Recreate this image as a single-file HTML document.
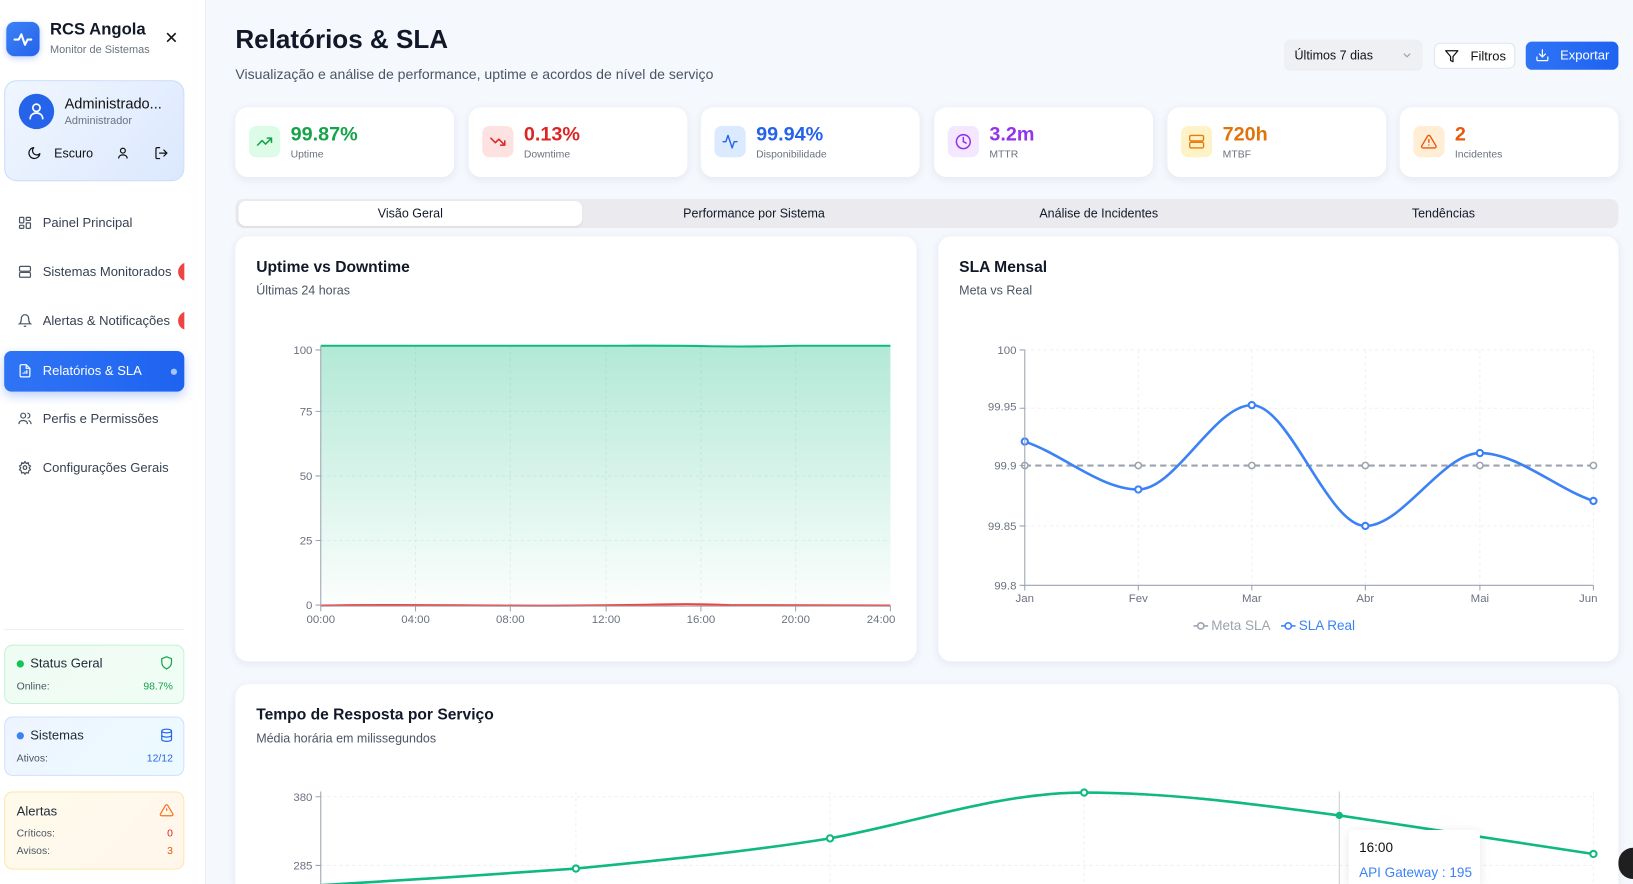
<!DOCTYPE html>
<html><head><meta charset="utf-8">
<style>
*{box-sizing:border-box;margin:0;padding:0}
html,body{width:1633px;height:884px;overflow:hidden;background:#f5f8fd}
body{font-family:"Liberation Sans",sans-serif;color:#111827}
#w{position:absolute;left:0;top:0;width:1568px;height:849px;transform:scale(1.04145);transform-origin:0 0;background:#f5f8fd;overflow:hidden}
.a{position:absolute}
.side{left:0;top:0;width:198px;height:849px;background:#fff;border-right:1px solid #e8ecf2;overflow:hidden}
.nav{position:absolute;left:4px;width:173px;height:39px;border-radius:7px;font-size:12.5px;color:#374151;overflow:hidden}
.nav span{position:absolute;left:37px;top:12px}
.nav svg{position:absolute;left:13px;top:12px}
.badge{position:absolute;left:167px;top:10px;width:18px;height:18px;border-radius:9px;background:#ef4444}
.card{background:#fff;border-radius:12px;box-shadow:0 2px 8px rgba(30,50,90,.08)}
.sc{position:absolute;top:103px;width:210px;height:67px}
.sc .ic{position:absolute;left:13px;top:18px;width:30px;height:30px;border-radius:7px}
.sc .ic svg{position:absolute;left:7px;top:7px}
.sc .v{position:absolute;left:53px;top:16px;font-size:19px;font-weight:bold}
.sc .l{position:absolute;left:53px;top:40px;font-size:10px;color:#6b7280}
.ctit{position:absolute;font-size:15px;font-weight:bold;color:#111827}
.csub{position:absolute;font-size:12px;color:#4b5563}
.tab{position:absolute;top:198px;font-size:12px;color:#111827;transform:translateX(-50%)}
.stc{position:absolute;left:4px;width:173px;border-radius:8px;font-size:12px}
</style></head><body>
<div id="w">
<!-- sidebar -->
<div class="a side">
  <div class="a" style="left:6px;top:21px;width:32px;height:33px;border-radius:8px;background:linear-gradient(135deg,#3b82f6,#2563eb);box-shadow:0 2px 6px rgba(37,99,235,.3)">
    <svg width="32" height="33" viewBox="0 0 32 33"><path d="M8 17h4l2.5-5 3.5 10 2.5-5H24" fill="none" stroke="#fff" stroke-width="2" stroke-linecap="round" stroke-linejoin="round"/></svg>
  </div>
  <div class="a" style="left:48px;top:20px;font-size:16px;font-weight:bold">RCS Angola</div>
  <div class="a" style="left:48px;top:42px;font-size:10.5px;color:#6b7280">Monitor de Sistemas</div>
  <div class="a" style="left:158px;top:27px;font-size:16px;color:#111">✕</div>
  <div class="a" style="left:4px;top:77px;width:173px;height:97px;border-radius:12px;background:linear-gradient(135deg,#f0f6ff,#dbe8fd);border:1px solid #c9dcfa"></div>
  <div class="a" style="left:18px;top:90px;width:34px;height:34px;border-radius:17px;background:#2563eb">
    <svg width="34" height="34" viewBox="0 0 34 34"><circle cx="17" cy="13.5" r="3.5" fill="none" stroke="#fff" stroke-width="1.6"/><path d="M11 24c0-3.5 2.7-5.5 6-5.5s6 2 6 5.5" fill="none" stroke="#fff" stroke-width="1.6" stroke-linecap="round"/></svg>
  </div>
  <div class="a" style="left:62px;top:91px;font-size:14px;color:#111">Administrado...</div>
  <div class="a" style="left:62px;top:110px;font-size:10.5px;color:#6b7280">Administrador</div>
  <svg class="a" style="left:26px;top:140px" width="14" height="14" viewBox="0 0 24 24"><path d="M21 13A9 9 0 1 1 11 3a7 7 0 0 0 10 10z" fill="none" stroke="#111" stroke-width="2" stroke-linejoin="round"/></svg>
  <div class="a" style="left:52px;top:140px;font-size:12px;color:#111">Escuro</div>
  <svg class="a" style="left:111px;top:140px" width="14" height="14" viewBox="0 0 24 24"><circle cx="12" cy="8" r="4" fill="none" stroke="#111" stroke-width="2"/><path d="M5 21c0-4 3-6 7-6s7 2 7 6" fill="none" stroke="#111" stroke-width="2"/></svg>
  <svg class="a" style="left:148px;top:140px" width="14" height="14" viewBox="0 0 24 24"><path d="M9 21H5a2 2 0 0 1-2-2V5a2 2 0 0 1 2-2h4M16 17l5-5-5-5M21 12H9" fill="none" stroke="#111" stroke-width="2" stroke-linecap="round" stroke-linejoin="round"/></svg>

  <div class="nav" style="top:195px"><svg width="14" height="14" viewBox="0 0 24 24" fill="none" stroke="#4b5563" stroke-width="2"><rect x="3" y="3" width="7" height="9" rx="1"/><rect x="14" y="3" width="7" height="5" rx="1"/><rect x="14" y="12" width="7" height="9" rx="1"/><rect x="3" y="16" width="7" height="5" rx="1"/></svg><span>Painel Principal</span></div>
  <div class="nav" style="top:242px"><svg width="14" height="14" viewBox="0 0 24 24" fill="none" stroke="#4b5563" stroke-width="2"><rect x="3" y="3" width="18" height="8" rx="2"/><rect x="3" y="13" width="18" height="8" rx="2"/></svg><span>Sistemas Monitorados</span><div class="badge"></div></div>
  <div class="nav" style="top:289px"><svg width="14" height="14" viewBox="0 0 24 24" fill="none" stroke="#4b5563" stroke-width="2"><path d="M6 8a6 6 0 0 1 12 0c0 7 3 9 3 9H3s3-2 3-9M10 21h4"/></svg><span>Alertas &amp; Notificações</span><div class="badge"></div></div>
  <div class="nav" style="top:337px;background:linear-gradient(90deg,#2f74f5,#1e63f0);box-shadow:0 4px 10px rgba(37,99,235,.3);color:#fff"><svg width="14" height="14" viewBox="0 0 24 24" fill="none" stroke="#fff" stroke-width="2"><path d="M14 2H6a2 2 0 0 0-2 2v16a2 2 0 0 0 2 2h12a2 2 0 0 0 2-2V8z"/><path d="M14 2v6h6M9 17v-2M12 17v-4M15 17v-6"/></svg><span style="top:12px">Relatórios &amp; SLA</span><div style="position:absolute;left:160px;top:17px;width:6px;height:6px;border-radius:3px;background:#a9c4fb"></div></div>
  <div class="nav" style="top:383px"><svg width="14" height="14" viewBox="0 0 24 24" fill="none" stroke="#4b5563" stroke-width="2"><circle cx="9" cy="7" r="4"/><path d="M2 21c0-4 3-6 7-6s7 2 7 6M16 3a4 4 0 0 1 0 8M22 21c0-3-2-5-4-6"/></svg><span>Perfis e Permissões</span></div>
  <div class="nav" style="top:430px"><svg width="14" height="14" viewBox="0 0 24 24" fill="none" stroke="#4b5563" stroke-width="2"><circle cx="12" cy="12" r="3"/><path d="M12 2l2 3 3.5-1 .5 3.5 3 2-2 3 2 3-3 2-.5 3.5-3.5-1-2 3-2-3-3.5 1L6 17.5l-3-2 2-3-2-3 3-2L6.5 4 10 5z"/></svg><span>Configurações Gerais</span></div>

  <div class="a" style="left:4px;top:604px;width:173px;height:1px;background:#edf0f4"></div>
  <div class="stc" style="top:619px;height:57px;background:linear-gradient(135deg,#effcf3,#f0fdf4);border:1px solid #c6f3d5">
    <div class="a" style="left:11px;top:14px;width:7px;height:7px;border-radius:4px;background:#16c35a"></div>
    <div class="a" style="left:24px;top:10px;font-size:12.5px;color:#1f2937">Status Geral</div>
    <svg class="a" style="left:148px;top:9px" width="14" height="15" viewBox="0 0 24 24" fill="none" stroke="#16a34a" stroke-width="2"><path d="M12 2l8 3v6c0 5-3.5 9-8 11-4.5-2-8-6-8-11V5z"/></svg>
    <div class="a" style="left:11px;top:34px;font-size:10px;color:#4b5563">Online:</div>
    <div class="a" style="right:10px;top:34px;font-size:10px;color:#16a34a">98.7%</div>
  </div>
  <div class="stc" style="top:688px;height:57px;background:linear-gradient(135deg,#eef4ff,#ecfbff);border:1px solid #cfe0fb">
    <div class="a" style="left:11px;top:14px;width:7px;height:7px;border-radius:4px;background:#3b82f6"></div>
    <div class="a" style="left:24px;top:10px;font-size:12.5px;color:#1f2937">Sistemas</div>
    <svg class="a" style="left:148px;top:10px" width="14" height="14" viewBox="0 0 24 24" fill="none" stroke="#2563eb" stroke-width="2"><ellipse cx="12" cy="5" rx="8" ry="3"/><path d="M4 5v14c0 1.7 3.6 3 8 3s8-1.3 8-3V5M4 12c0 1.7 3.6 3 8 3s8-1.3 8-3"/></svg>
    <div class="a" style="left:11px;top:34px;font-size:10px;color:#4b5563">Ativos:</div>
    <div class="a" style="right:10px;top:34px;font-size:10px;color:#2563eb">12/12</div>
  </div>
  <div class="stc" style="top:760px;height:75px;background:linear-gradient(135deg,#fffbeb,#fff5ec);border:1px solid #fde6a8">
    <div class="a" style="left:11px;top:11px;font-size:12.5px;color:#1f2937">Alertas</div>
    <svg class="a" style="left:148px;top:10px" width="14" height="14" viewBox="0 0 24 24" fill="none" stroke="#f97316" stroke-width="2"><path d="M10.3 3.9L1.8 18a2 2 0 0 0 1.7 3h17a2 2 0 0 0 1.7-3L13.7 3.9a2 2 0 0 0-3.4 0zM12 9v4M12 17h.01"/></svg>
    <div class="a" style="left:11px;top:34px;font-size:10px;color:#4b5563">Críticos:</div>
    <div class="a" style="right:10px;top:34px;font-size:10px;color:#dc2626">0</div>
    <div class="a" style="left:11px;top:51px;font-size:10px;color:#4b5563">Avisos:</div>
    <div class="a" style="right:10px;top:51px;font-size:10px;color:#ea580c">3</div>
  </div>
</div>

<!-- header -->
<div class="a" style="left:226px;top:24px;font-size:25px;font-weight:bold;color:#111827">Relatórios &amp; SLA</div>
<div class="a" style="left:226px;top:64px;font-size:13.5px;color:#4b5563">Visualização e análise de performance, uptime e acordos de nível de serviço</div>
<div class="a" style="left:1233px;top:38px;width:133px;height:30px;border-radius:6px;background:#eff0f3;font-size:12px;color:#111"><span style="position:absolute;left:10px;top:8px">Últimos 7 dias</span><svg style="position:absolute;right:10px;top:11px" width="10" height="8" viewBox="0 0 10 8"><path d="M2 2.5l3 3 3-3" fill="none" stroke="#9ca3af" stroke-width="1.2"/></svg></div>
<div class="a" style="left:1377px;top:41px;width:78px;height:25px;border-radius:6px;background:#fff;border:1px solid #e1e4e8;font-size:12.5px;color:#111"><svg style="position:absolute;left:9px;top:5px" width="14" height="14" viewBox="0 0 24 24"><path d="M22 3H2l8 9.5V19l4 2v-8.5z" fill="none" stroke="#111" stroke-width="2" stroke-linejoin="round"/></svg><span style="position:absolute;left:34px;top:5px">Filtros</span></div>
<div class="a" style="left:1465px;top:40px;width:89px;height:27px;border-radius:6px;background:linear-gradient(90deg,#2f74f5,#1e63f0);font-size:12.5px;color:#fff"><svg style="position:absolute;left:9px;top:6px" width="14" height="14" viewBox="0 0 24 24" fill="none" stroke="#fff" stroke-width="2" stroke-linecap="round"><path d="M21 15v4a2 2 0 0 1-2 2H5a2 2 0 0 1-2-2v-4M7 10l5 5 5-5M12 15V3"/></svg><span style="position:absolute;left:33px;top:6px">Exportar</span></div>

<!-- stat cards -->
<div class="card sc" style="left:226px"><div class="ic" style="background:#dcfce7"><svg width="16" height="16" viewBox="0 0 24 24" fill="none" stroke="#16a34a" stroke-width="2.2" stroke-linecap="round" stroke-linejoin="round"><path d="M22 7l-8.5 8.5-5-5L2 17M16 7h6v6"/></svg></div><div class="v" style="color:#16a34a">99.87%</div><div class="l">Uptime</div></div>
<div class="card sc" style="left:450px"><div class="ic" style="background:#fee2e2"><svg width="16" height="16" viewBox="0 0 24 24" fill="none" stroke="#dc2626" stroke-width="2.2" stroke-linecap="round" stroke-linejoin="round"><path d="M22 17l-8.5-8.5-5 5L2 7M16 17h6v-6"/></svg></div><div class="v" style="color:#dc2626">0.13%</div><div class="l">Downtime</div></div>
<div class="card sc" style="left:673px"><div class="ic" style="background:#dbeafe"><svg width="16" height="16" viewBox="0 0 24 24" fill="none" stroke="#2563eb" stroke-width="2" stroke-linecap="round" stroke-linejoin="round"><path d="M22 12h-4l-3 9L9 3l-3 9H2"/></svg></div><div class="v" style="color:#2563eb">99.94%</div><div class="l">Disponibilidade</div></div>
<div class="card sc" style="left:897px"><div class="ic" style="background:#f3e8ff"><svg width="16" height="16" viewBox="0 0 24 24" fill="none" stroke="#9333ea" stroke-width="2.2" stroke-linecap="round"><circle cx="12" cy="12" r="10"/><path d="M12 6v6l4 2"/></svg></div><div class="v" style="color:#9333ea">3.2m</div><div class="l">MTTR</div></div>
<div class="card sc" style="left:1121px"><div class="ic" style="background:#fef3c7"><svg width="16" height="16" viewBox="0 0 24 24" fill="none" stroke="#ea7a0c" stroke-width="2"><rect x="2" y="3" width="20" height="8" rx="2"/><rect x="2" y="13" width="20" height="8" rx="2"/><path d="M6 7h.01M6 17h.01"/></svg></div><div class="v" style="color:#e0730a">720h</div><div class="l">MTBF</div></div>
<div class="card sc" style="left:1344px"><div class="ic" style="background:#ffedd5"><svg width="16" height="16" viewBox="0 0 24 24" fill="none" stroke="#ea580c" stroke-width="2" stroke-linecap="round"><path d="M10.3 3.9L1.8 18a2 2 0 0 0 1.7 3h17a2 2 0 0 0 1.7-3L13.7 3.9a2 2 0 0 0-3.4 0zM12 9v4M12 17h.01"/></svg></div><div class="v" style="color:#ea580c">2</div><div class="l">Incidentes</div></div>

<!-- tabs -->
<div class="a" style="left:226px;top:191px;width:1328px;height:28px;border-radius:8px;background:#ebebef"></div>
<div class="a" style="left:229px;top:193px;width:330px;height:24px;border-radius:7px;background:#fff;box-shadow:0 1px 2px rgba(0,0,0,.06)"></div>
<div class="tab" style="left:394px">Visão Geral</div>
<div class="tab" style="left:724px">Performance por Sistema</div>
<div class="tab" style="left:1055px">Análise de Incidentes</div>
<div class="tab" style="left:1386px">Tendências</div>

<!-- chart cards -->
<div class="a card" style="left:226px;top:227px;width:654px;height:408px"></div>
<div class="a card" style="left:901px;top:227px;width:653px;height:408px"></div>
<div class="a card" style="left:226px;top:657px;width:1328px;height:192px;border-radius:12px 12px 0 0"></div>
<div class="ctit" style="left:246px;top:248px">Uptime vs Downtime</div>
<div class="csub" style="left:246px;top:272px">Últimas 24 horas</div>
<div class="ctit" style="left:921px;top:248px">SLA Mensal</div>
<div class="csub" style="left:921px;top:272px">Meta vs Real</div>
<div class="ctit" style="left:246px;top:678px">Tempo de Resposta por Serviço</div>
<div class="csub" style="left:246px;top:702px">Média horária em milissegundos</div>

<svg class="a" style="left:0;top:0" width="1568" height="849" viewBox="0 0 1568 849" font-family="Liberation Sans, sans-serif" font-size="11" fill="#6b7280">
<defs><linearGradient id="g1" x1="0" y1="0" x2="0" y2="1"><stop offset="0" stop-color="#10b981" stop-opacity=".32"/><stop offset="1" stop-color="#10b981" stop-opacity="0.01"/></linearGradient></defs>
<g stroke="#eef0f3" stroke-dasharray="3 3"><path d="M308 395H855M308 457H855M308 519H855M399 332V582M490 332V582M582 332V582M673 332V582M764 332V582"/></g>
<path d="M308 332 L500 332 L600 332.5 L673 333 L764 332 L855 332 L855 582 L308 582Z" fill="url(#g1)"/>
<path d="M308 332 C400 332 500 332.5 600 332 S680 334 764 332 L855 332" fill="none" stroke="#10b981" stroke-width="2"/>
<path d="M308 581.5 C400 580 450 582 550 581.5 S640 579 700 581 L855 581.5" fill="none" stroke="#ef4444" stroke-width="2"/>
<g stroke="#9ca3af" fill="none"><path d="M308 332V582H855"/><path d="M303 336h5M303 395h5M303 457h5M303 519h5M303 581h5M308 582v5M399 582v5M490 582v5M582 582v5M673 582v5M764 582v5M855 582v5"/></g>
<g text-anchor="end"><text x="300" y="340">100</text><text x="300" y="399">75</text><text x="300" y="461">50</text><text x="300" y="523">25</text><text x="300" y="585">0</text></g>
<g text-anchor="middle"><text x="308" y="598">00:00</text><text x="399" y="598">04:00</text><text x="490" y="598">08:00</text><text x="582" y="598">12:00</text><text x="673" y="598">16:00</text><text x="764" y="598">20:00</text><text x="846" y="598">24:00</text></g>
<g stroke="#eef0f3" stroke-dasharray="3 3"><path d="M984 336H1530M984 392H1530M984 505H1530M1093 336V562M1202 336V562M1311 336V562M1421 336V562M1530 336V562"/></g>
<path d="M984 447H1530" stroke="#9ca3af" stroke-width="2" stroke-dasharray="6 4" fill="none"/>
<g fill="#fff" stroke="#9ca3af" stroke-width="1.5"><circle cx="984" cy="447" r="3"/><circle cx="1093" cy="447" r="3"/><circle cx="1202" cy="447" r="3"/><circle cx="1311" cy="447" r="3"/><circle cx="1421" cy="447" r="3"/><circle cx="1530" cy="447" r="3"/></g>
<path d="M984,424 C1020,436 1057,470 1093,470 C1129,470 1166,389 1202,389 C1238,389 1275,505 1311,505 C1347,505 1385,435 1421,435 C1457,435 1494,469 1530,481" fill="none" stroke="#3b82f6" stroke-width="2.5"/>
<g fill="#fff" stroke="#3b82f6" stroke-width="2"><circle cx="984" cy="424" r="3"/><circle cx="1093" cy="470" r="3"/><circle cx="1202" cy="389" r="3"/><circle cx="1311" cy="505" r="3"/><circle cx="1421" cy="435" r="3"/><circle cx="1530" cy="481" r="3"/></g>
<g stroke="#9ca3af" fill="none"><path d="M984 336V562H1530"/><path d="M979 336h5M979 392h5M979 447h5M979 505h5M979 562h5M984 562v5M1093 562v5M1202 562v5M1311 562v5M1421 562v5M1530 562v5"/></g>
<g text-anchor="end"><text x="976" y="340">100</text><text x="976" y="394">99.95</text><text x="976" y="451">99.9</text><text x="976" y="509">99.85</text><text x="976" y="566">99.8</text></g>
<g text-anchor="middle"><text x="984" y="578">Jan</text><text x="1093" y="578">Fev</text><text x="1202" y="578">Mar</text><text x="1311" y="578">Abr</text><text x="1421" y="578">Mai</text><text x="1525" y="578">Jun</text></g>
<g font-size="13"><path d="M1146 601h14" stroke="#9ca3af" stroke-width="1.5"/><circle cx="1153" cy="601" r="3" fill="#fff" stroke="#9ca3af" stroke-width="1.5"/><text x="1163" y="605" fill="#9ca3af">Meta SLA</text>
<path d="M1230 601h14" stroke="#3b82f6" stroke-width="1.5"/><circle cx="1237" cy="601" r="3" fill="#fff" stroke="#3b82f6" stroke-width="1.5"/><text x="1247" y="605" fill="#3b82f6">SLA Real</text></g>
<g stroke="#eef0f3" stroke-dasharray="3 3"><path d="M308 765H1530M308 831H1530M553 760V849M797 760V849M1041 760V849M1530 760V849"/></g>
<path d="M1286 760V849" stroke="#ccc"/>
<path d="M308,850 C390,845 471,840 553,834 C634,826 716,818 797,805 C878,790 960,761 1041,761 C1123,761 1204,772 1286,783 C1367,795 1449,808 1530,820" fill="none" stroke="#10b981" stroke-width="2.5"/>
<g fill="#fff" stroke="#10b981" stroke-width="2"><circle cx="553" cy="834" r="3"/><circle cx="797" cy="805" r="3"/><circle cx="1041" cy="761" r="3"/><circle cx="1530" cy="820" r="3"/></g>
<circle cx="1286" cy="783" r="3.5" fill="#10b981"/>
<g stroke="#9ca3af" fill="none"><path d="M308 760V849"/><path d="M303 765h5M303 831h5"/></g>
<g text-anchor="end"><text x="300" y="769">380</text><text x="300" y="835">285</text></g>
</svg>
<div class="a" style="left:1295px;top:797px;width:126px;height:52px;background:#fff;border-radius:4px 4px 0 0;box-shadow:0 2px 10px rgba(0,0,0,.1)"><div style="position:absolute;left:10px;top:9px;font-size:13px;color:#111">16:00</div><div style="position:absolute;left:10px;top:33px;font-size:13px;color:#3b82f6">API Gateway : 195</div></div>
<div class="a" style="left:1554px;top:814px;width:14px;height:30px;border-radius:15px 0 0 15px;background:#1f1f1f"></div>
</div>
</body></html>
